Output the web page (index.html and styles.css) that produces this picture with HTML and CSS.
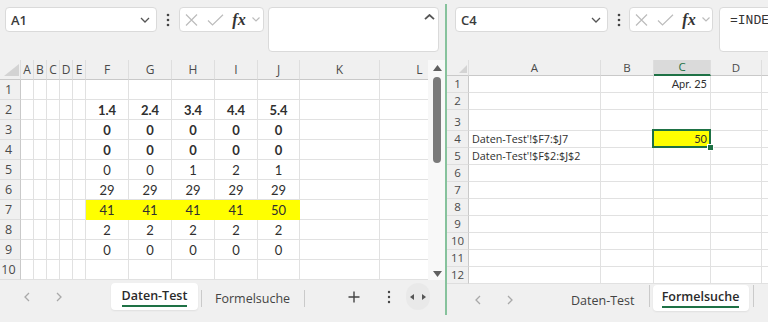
FILE: index.html
```html
<!DOCTYPE html>
<html lang="de">
<head>
<meta charset="utf-8">
<title>Excel</title>
<link rel="stylesheet" href="styles.css">
</head>
<body>
<div class="pane pane-left">
  <div class="toolbar">
    <div class="box namebox"><span>A1</span><svg width="10" height="6" viewBox="0 0 10 6"><path class="st-dark" d="M1 1l4 4 4-4"/></svg></div>
    <div class="dots"><svg width="4" height="14" viewBox="0 0 4 14"><circle cx="2" cy="2" r="1.3"/><circle cx="2" cy="7" r="1.3"/><circle cx="2" cy="12" r="1.3"/></svg></div>
    <div class="box fxbox">
      <span class="fxi"><svg width="13" height="12" viewBox="0 0 13 12"><path class="st-light" d="M1 0.5l11 11M12 0.5l-11 11"/></svg></span>
      <span class="fxi fxw"><svg width="17" height="12" viewBox="0 0 17 12"><path class="st-light" d="M1 6.5l4.5 4.5L16 0.8"/></svg></span>
      <span class="fxt">fx</span>
      <span class="fxc"><svg width="8" height="5" viewBox="0 0 8 5"><path class="st-light" d="M0.5 0.5l3.5 3.5 3.5-3.5"/></svg></span>
    </div>
    <div class="box formula"><svg width="11" height="6" viewBox="0 0 11 6"><path class="st-caret" d="M1 5.2l4.5-4.2 4.5 4.2"/></svg></div>
  </div>
  <div class="gridwrap">
    <div class="clip clip-l">
      <div class="grid grid-l">
        <div class="c h corner"><svg width="15" height="12" viewBox="0 0 15 12"><polygon points="15,0 15,12 0,12" fill="#d3d3d3"/></svg></div>
        <div class="c h">A</div><div class="c h">B</div><div class="c h">C</div><div class="c h">D</div><div class="c h">E</div><div class="c h">F</div><div class="c h">G</div><div class="c h">H</div><div class="c h">I</div><div class="c h">J</div><div class="c h">K</div><div class="c h">L</div>

        <div class="c r">1</div><div class="c"></div><div class="c"></div><div class="c"></div><div class="c"></div><div class="c"></div><div class="c"></div><div class="c"></div><div class="c"></div><div class="c"></div><div class="c"></div><div class="c"></div><div class="c"></div>

        <div class="c r">2</div><div class="c"></div><div class="c"></div><div class="c"></div><div class="c"></div><div class="c"></div><div class="c b">1.4</div><div class="c b">2.4</div><div class="c b">3.4</div><div class="c b">4.4</div><div class="c b">5.4</div><div class="c"></div><div class="c"></div>

        <div class="c r">3</div><div class="c"></div><div class="c"></div><div class="c"></div><div class="c"></div><div class="c"></div><div class="c b">0</div><div class="c b">0</div><div class="c b">0</div><div class="c b">0</div><div class="c b">0</div><div class="c"></div><div class="c"></div>

        <div class="c r">4</div><div class="c"></div><div class="c"></div><div class="c"></div><div class="c"></div><div class="c"></div><div class="c b">0</div><div class="c b">0</div><div class="c b">0</div><div class="c b">0</div><div class="c b">0</div><div class="c"></div><div class="c"></div>

        <div class="c r">5</div><div class="c"></div><div class="c"></div><div class="c"></div><div class="c"></div><div class="c"></div><div class="c">0</div><div class="c">0</div><div class="c">1</div><div class="c">2</div><div class="c">1</div><div class="c"></div><div class="c"></div>

        <div class="c r">6</div><div class="c"></div><div class="c"></div><div class="c"></div><div class="c"></div><div class="c"></div><div class="c">29</div><div class="c">29</div><div class="c">29</div><div class="c">29</div><div class="c">29</div><div class="c"></div><div class="c"></div>

        <div class="c r">7</div><div class="c"></div><div class="c"></div><div class="c"></div><div class="c"></div><div class="c"></div><div class="c y">41</div><div class="c y">41</div><div class="c y">41</div><div class="c y">41</div><div class="c y">50</div><div class="c"></div><div class="c"></div>

        <div class="c r">8</div><div class="c"></div><div class="c"></div><div class="c"></div><div class="c"></div><div class="c"></div><div class="c">2</div><div class="c">2</div><div class="c">2</div><div class="c">2</div><div class="c">2</div><div class="c"></div><div class="c"></div>

        <div class="c r">9</div><div class="c"></div><div class="c"></div><div class="c"></div><div class="c"></div><div class="c"></div><div class="c">0</div><div class="c">0</div><div class="c">0</div><div class="c">0</div><div class="c">0</div><div class="c"></div><div class="c"></div>

        <div class="c r">10</div><div class="c"></div><div class="c"></div><div class="c"></div><div class="c"></div><div class="c"></div><div class="c"></div><div class="c"></div><div class="c"></div><div class="c"></div><div class="c"></div><div class="c"></div><div class="c"></div>
      </div>
    </div>
    <div class="vscroll">
      <svg class="arr-up" width="9" height="6" viewBox="0 0 9 6"><polygon points="4.5,0 9,6 0,6" fill="#5f5f5f"/></svg>
      <div class="thumb"></div>
      <div class="spacer"></div>
      <svg class="arr-down" width="9" height="6" viewBox="0 0 9 6"><polygon points="0,0 9,0 4.5,6" fill="#5f5f5f"/></svg>
    </div>
  </div>
  <div class="tabbar">
    <div class="nav"><svg width="6" height="10" viewBox="0 0 6 10"><path class="st-nav" d="M5 1L1 5l4 4"/></svg></div>
    <div class="nav"><svg width="6" height="10" viewBox="0 0 6 10"><path class="st-nav" d="M1 1l4 4-4 4"/></svg></div>
    <div class="tab active tab-l1"><span>Daten-Test</span></div>
    <div class="sep sep-l1"></div>
    <div class="tab inactive"><span>Formelsuche</span></div>
    <div class="sep sep-l2"></div>
    <div class="tool plus"><svg width="12" height="12" viewBox="0 0 12 12"><path class="st-plus" d="M6 0.5v11M0.5 6h11"/></svg></div>
    <div class="tool more"><svg width="4" height="14" viewBox="0 0 4 14"><circle cx="2" cy="2" r="1.2"/><circle cx="2" cy="7" r="1.2"/><circle cx="2" cy="12" r="1.2"/></svg></div>
    <div class="tool pill"><svg width="16" height="8" viewBox="0 0 16 8"><polygon points="0,4 4,1 4,7" fill="#555"/><polygon points="16,4 12,1 12,7" fill="#555"/></svg></div>
  </div>
</div>
<div class="divider"></div>
<div class="pane pane-right">
  <div class="toolbar">
    <div class="box namebox"><span>C4</span><svg width="10" height="6" viewBox="0 0 10 6"><path class="st-dark" d="M1 1l4 4 4-4"/></svg></div>
    <div class="dots"><svg width="4" height="14" viewBox="0 0 4 14"><circle cx="2" cy="2" r="1.3"/><circle cx="2" cy="7" r="1.3"/><circle cx="2" cy="12" r="1.3"/></svg></div>
    <div class="box fxbox">
      <span class="fxi"><svg width="13" height="12" viewBox="0 0 13 12"><path class="st-light" d="M1 0.5l11 11M12 0.5l-11 11"/></svg></span>
      <span class="fxi fxw"><svg width="17" height="12" viewBox="0 0 17 12"><path class="st-light" d="M1 6.5l4.5 4.5L16 0.8"/></svg></span>
      <span class="fxt">fx</span>
      <span class="fxc"><svg width="8" height="5" viewBox="0 0 8 5"><path class="st-light" d="M0.5 0.5l3.5 3.5 3.5-3.5"/></svg></span>
    </div>
    <div class="box formula">=INDEX(</div>
  </div>
  <div class="clip clip-r">
    <div class="grid grid-r">
      <div class="c h corner"><svg width="8" height="8" viewBox="0 0 8 8"><polygon points="8,0 8,8 0,8" fill="#d3d3d3"/></svg></div>
      <div class="c h">A</div><div class="c h">B</div><div class="c h selc">C</div><div class="c h">D</div><div class="c h"></div>

      <div class="c r">1</div><div class="c"></div><div class="c"></div><div class="c ar">Apr. 25</div><div class="c"></div><div class="c"></div>
      <div class="c r">2</div><div class="c"></div><div class="c"></div><div class="c"></div><div class="c"></div><div class="c"></div>
      <div class="c r">3</div><div class="c"></div><div class="c"></div><div class="c"></div><div class="c"></div><div class="c"></div>
      <div class="c r">4</div><div class="c al">Daten-Test'!$F7:$J7</div><div class="c"></div><div class="c ar yc sel">50<span class="handle"></span></div><div class="c"></div><div class="c"></div>
      <div class="c r">5</div><div class="c al">Daten-Test'!$F$2:$J$2</div><div class="c"></div><div class="c"></div><div class="c"></div><div class="c"></div>
      <div class="c r">6</div><div class="c"></div><div class="c"></div><div class="c"></div><div class="c"></div><div class="c"></div>
      <div class="c r">7</div><div class="c"></div><div class="c"></div><div class="c"></div><div class="c"></div><div class="c"></div>
      <div class="c r">8</div><div class="c"></div><div class="c"></div><div class="c"></div><div class="c"></div><div class="c"></div>
      <div class="c r">9</div><div class="c"></div><div class="c"></div><div class="c"></div><div class="c"></div><div class="c"></div>
      <div class="c r">10</div><div class="c"></div><div class="c"></div><div class="c"></div><div class="c"></div><div class="c"></div>
      <div class="c r">11</div><div class="c"></div><div class="c"></div><div class="c"></div><div class="c"></div><div class="c"></div>
      <div class="c r">12</div><div class="c"></div><div class="c"></div><div class="c"></div><div class="c"></div><div class="c"></div>
    </div>
  </div>
  <div class="tabbar">
    <div class="nav"><svg width="6" height="10" viewBox="0 0 6 10"><path class="st-nav" d="M5 1L1 5l4 4"/></svg></div>
    <div class="nav"><svg width="6" height="10" viewBox="0 0 6 10"><path class="st-nav" d="M1 1l4 4-4 4"/></svg></div>
    <div class="tab inactive tab-r1"><span>Daten-Test</span></div>
    <div class="sep sep-r1"></div>
    <div class="tab active tab-r2"><span>Formelsuche</span></div>
    <div class="sep sep-r2"></div>
  </div>
</div>
</body>
</html>
```

FILE: styles.css
```css
* { box-sizing: border-box; margin: 0; padding: 0; }
html, body { width: 768px; height: 322px; overflow: hidden; }
body {
  background: #f0f0f0;
  font-family: "Open Sans", "Noto Sans", sans-serif;
  color: #333;
  display: flex;
  align-items: flex-start;
}
.pane { display: flex; flex-direction: column; overflow: hidden; height: 322px; flex: none; }
.pane-left { width: 445px; }
.pane-right { width: 321px; }
.divider { width: 2px; height: 311px; flex: none; background: #86c29c; margin-top: 4px; }

/* toolbar */
.toolbar { height: 60px; flex: none; display: flex; align-items: flex-start; padding-top: 7px; }
.pane-left .toolbar { padding-left: 5px; }
.pane-right .toolbar { padding-left: 8px; }
.box { background: #fff; border: 1px solid #dadada; border-radius: 4px; flex: none; }
.namebox {
  height: 25px; display: flex; align-items: center; justify-content: space-between;
  padding: 0 6px 0 5px; font-size: 13px; font-weight: 600; color: #3b3b3b;
}
.pane-left .namebox { width: 152px; }
.pane-right .namebox { width: 153px; }
.dots { height: 25px; display: flex; align-items: center; justify-content: center; flex: none; fill: #444; }
.pane-left .dots { width: 22px; }
.pane-right .dots { width: 21px; }
.fxbox { height: 25px; display: flex; align-items: center; }
.pane-left .fxbox { width: 85px; }
.pane-right .fxbox { width: 84px; }
.fxi { width: 22px; display: flex; justify-content: center; flex: none; }
.fxw { width: 26px; }
.fxt {
  width: 22px; flex: none; text-align: center; font-family: "Liberation Serif", serif;
  font-style: italic; font-weight: bold; font-size: 16px; color: #333; line-height: 20px;
}
.fxc { width: 12px; display: flex; justify-content: center; flex: none; }
.formula { height: 45px; }
.pane-left .formula { width: 171px; margin-left: 4px; display: flex; justify-content: flex-end; align-items: flex-start; padding: 6px 3px 0 0; }
.pane-right .formula {
  width: 200px; margin-left: 6px; padding: 4px 0 0 10px;
  font-family: "Liberation Mono", monospace; font-size: 13px; line-height: 17px; white-space: nowrap; color: #333;
}
svg path { fill: none; }
.st-dark { stroke: #555; stroke-width: 1.3; }
.st-light { stroke: #bcbcbc; stroke-width: 1.2; }
.st-caret { stroke: #555; stroke-width: 1.8; }
.st-nav { stroke: #a9a9a9; stroke-width: 1.3; }
.st-plus { stroke: #444; stroke-width: 1.4; }

/* grids */
.gridwrap { display: flex; height: 220px; flex: none; }
.clip { overflow: hidden; flex: none; }
.clip-l { width: 428px; height: 220px; }
.clip-r { width: 321px; height: 224px; }
.grid { display: grid; }
.grid-l {
  width: 460px;
  grid-template-columns: 21px repeat(5, 13px) repeat(4, 43px) 42px 80px 80px;
  grid-auto-rows: 20px;
}
.grid-r {
  width: 375px;
  grid-template-columns: 22px 132px 53px 57px 51px 60px;
  grid-template-rows: 16px 17px 17px 21px repeat(9, 17px);
}
.c {
  background: #fff;
  border-right: 1px solid #e1e1e1;
  border-bottom: 1px solid #e1e1e1;
  display: flex; align-items: center; justify-content: center;
  font-family: Lato, "Liberation Sans", sans-serif; font-size: 13px; color: #2f2f2f;
  white-space: nowrap;
}
.h {
  background: #f0f0f0; font-family: "Open Sans", sans-serif; font-size: 12px; color: #4a4a4a;
  border-right-color: #dedede; border-bottom-color: #c9c9c9;
}
.r {
  background: #f0f0f0; font-family: "Open Sans", sans-serif; font-size: 12.5px; color: #4a4a4a;
  border-right-color: #c9c9c9; border-bottom-color: #dedede; padding-right: 3px;
}
.corner { justify-content: flex-end; align-items: flex-end; padding: 0 1px 3px 0; }
.b { font-weight: 700; }
.y { background: #ffff00; border-right-color: #ffff00; border-bottom-color: #ffff00; }

.grid-r .c { font-size: 11px; align-items: flex-end; padding-bottom: 1px; line-height: 14px; }
.grid-r .h { font-size: 11.5px; align-items: center; padding-bottom: 0; }
.grid-r .r { font-size: 11.5px; padding-right: 0; }
.grid-r .corner { align-items: flex-end; padding: 0 1px 2px 0; }
.grid-r .al { font-family: "Open Sans", sans-serif; font-size: 10.8px; }
.al { justify-content: flex-start !important; padding-left: 3px; }
.ar { justify-content: flex-end !important; padding-right: 3px; }
.selc { background: #dadada; color: #1e7145; border-bottom: 2px solid #1e7145; }
.yc { background: #ffff00; }
.sel { position: relative; }
.sel::after {
  content: ""; position: absolute; left: -2px; top: -2px; right: -1px; bottom: -1px;
  border: 2px solid #1e7145; pointer-events: none;
}
.handle {
  position: absolute; right: -4px; bottom: -4px; width: 7px; height: 7px;
  background: #1e7145; border: 1px solid #fff; z-index: 2;
}

/* scrollbar */
.vscroll { width: 17px; flex: none; background: #f8f8f8; display: flex; flex-direction: column; align-items: center; padding-left: 1px; }
.arr-up { margin-top: 5px; flex: none; }
.thumb { width: 8px; height: 86px; margin-top: 6px; border-radius: 4px; background: #7a7a7a; flex: none; }
.spacer { flex: 1; }
.arr-down { margin-bottom: 3px; flex: none; }

/* tab bar */
.tabbar { flex: none; display: flex; align-items: flex-start; }
.pane-left .tabbar { height: 42px; padding-left: 11px; padding-right: 15px; }
.pane-right .tabbar { height: 38px; padding-left: 15px; }
.nav { width: 32px; flex: none; display: flex; align-items: center; justify-content: center; }
.pane-left .nav { height: 27px; margin-top: 3px; }
.pane-right .nav { height: 26px; margin-top: 3px; }
.tab { flex: none; display: flex; align-items: center; justify-content: center; font-size: 12.5px; color: #444; white-space: nowrap; line-height: 17px; }
.tab.inactive { padding: 4px 13px 0; }
.tab.active { background: #fff; border-radius: 4px; font-weight: 600; color: #2a2a2a; box-shadow: 0 1px 2px rgba(0,0,0,0.07); }
.tab.active span { border-bottom: 2px solid #1e7145; padding-bottom: 1px; }
.pane-left .tab { height: 27px; margin-top: 3px; }
.pane-right .tab { height: 26px; margin-top: 1px; }
.tab-l1 { width: 87px; margin-left: 36px; }
.tab-r1 { margin-left: 32px; }
.tab-r2 { width: 96px; margin-left: 3px; }
.sep { width: 1px; background: #cacaca; flex: none; }
.sep-l1 { margin-left: 3px; margin-top: 10px; height: 17px; }
.sep-l2 { margin-left: 1px; margin-top: 10px; height: 17px; }
.sep-r1 { margin-left: 1px; margin-top: 1px; height: 22px; }
.sep-r2 { margin-left: 4px; margin-top: 1px; height: 22px; }
.tool { flex: none; height: 27px; margin-top: 3px; display: flex; align-items: center; justify-content: center; fill: #444; }
.plus { width: 24px; margin-left: auto; }
.more { width: 14px; margin-left: 16px; }
.pill { width: 24px; margin-left: 10px; background: #e9e9e9; border-radius: 12px; }
```
